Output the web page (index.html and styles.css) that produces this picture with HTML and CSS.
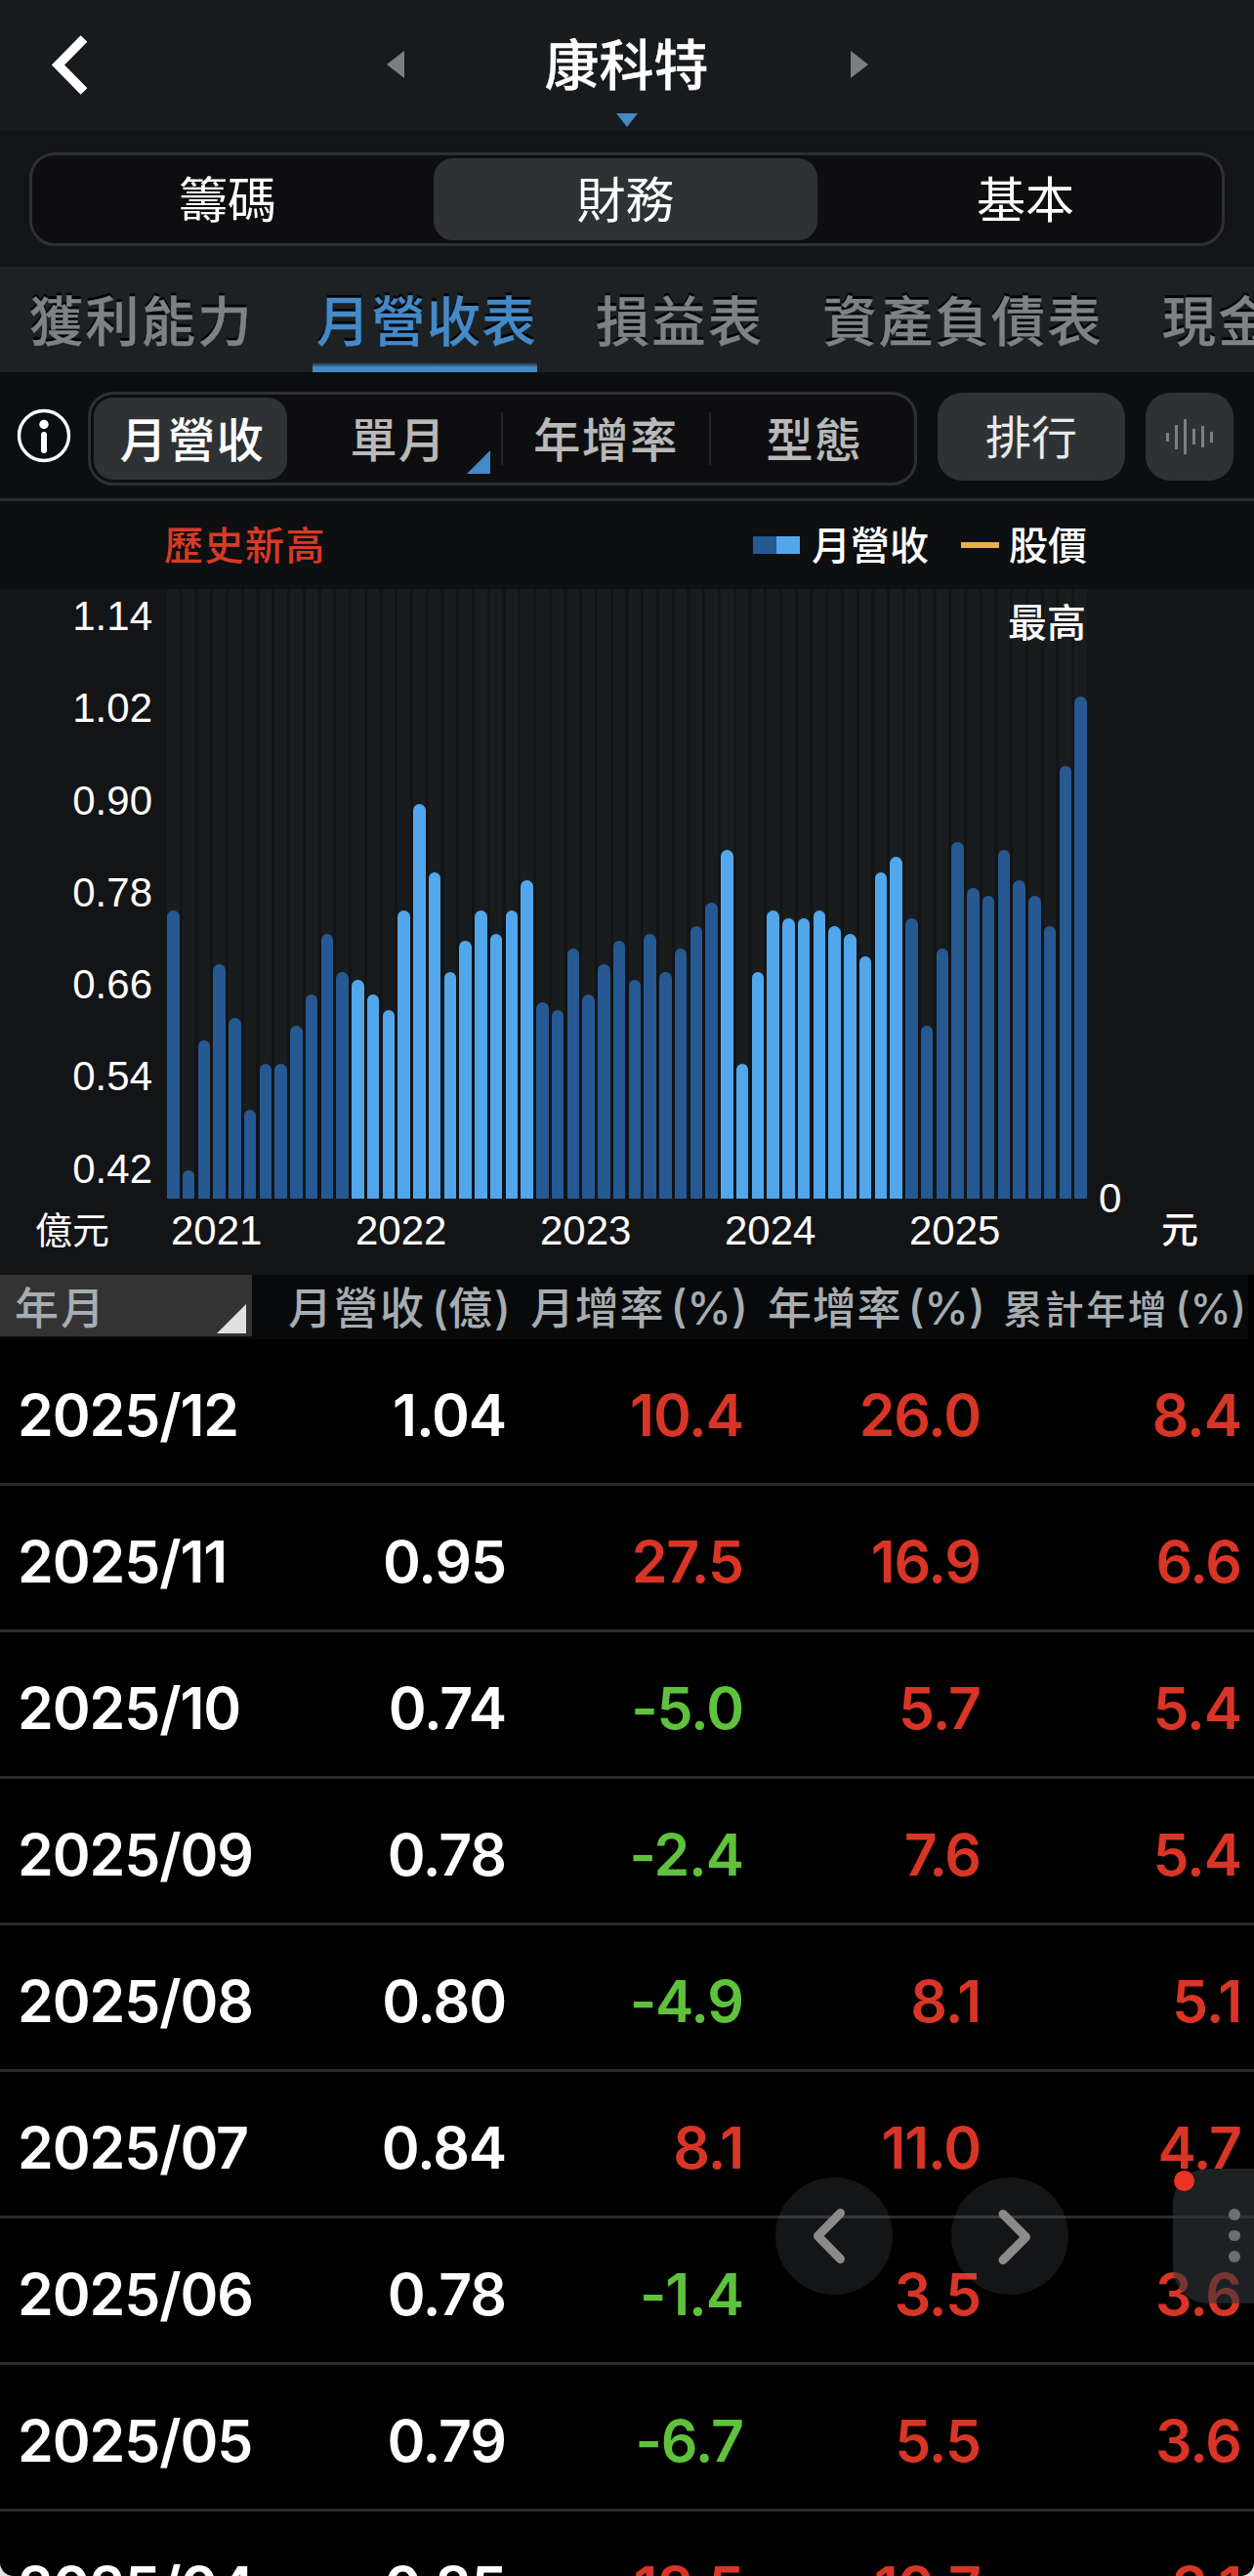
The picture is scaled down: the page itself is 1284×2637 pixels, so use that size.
FILE: index.html
```html
<!DOCTYPE html>
<html lang="zh-Hant">
<head>
<meta charset="utf-8">
<title>康科特 月營收表</title>
<link rel="stylesheet" href="styles.css">
</head>
<body>
<main class="app">
  <header class="header">
    <svg class="back" viewBox="0 0 38 62"><path d="M34 3.500 7.500 30.500 34 57.500" fill="none" stroke="#fff" stroke-width="9.5"/></svg>
    <svg class="prev" viewBox="0 0 18 28"><path d="M18 0v28L0 14z" fill="#7b7f82"/></svg>
    <h1 class="title">康科特<svg class="drop" viewBox="0 0 22 14"><path d="M0 0h22L11 14z" fill="#4489c8"/></svg></h1>
    <svg class="next" viewBox="0 0 18 28"><path d="M0 0v28L18 14z" fill="#7b7f82"/></svg>
  </header>

  <nav class="section-bar">
    <div class="segments">
      <span class="segment">籌碼</span><span class="segment segment-on">財務</span><span class="segment">基本</span>
    </div>
  </nav>

  <nav class="tabs">
    <span class="tab">獲利能力</span><span class="tab tab-on">月營收表</span><span class="tab">損益表</span><span class="tab">資產負債表</span><span class="tab">現金流量表</span>
  </nav>

  <div class="toolbar">
    <svg class="info" viewBox="0 0 56 56"><circle cx="28" cy="28" r="25.5" fill="none" stroke="#fff" stroke-width="3.4"/><circle cx="28" cy="16.500" r="4.700" fill="#fff"/><path d="M28 27v16" stroke="#fff" stroke-width="6" stroke-linecap="round"/></svg>
    <div class="filters">
      <span class="filter filter-on">月營收</span>
      <span class="filter">單月<i class="corner"></i></span>
      <span class="filter filter-line">年增率</span>
      <span class="filter filter-line filter-last">型態</span>
    </div>
    <button class="rank">排行</button>
    <button class="voice"><svg viewBox="0 0 90 90"><path d="M22.500 41v9M31.500 33v25M40.500 27v36M49.500 37v16M58.500 34v22M67.500 40v11" stroke="#7c8083" stroke-width="3"/></svg></button>
  </div>

  <section class="chart">
    <div class="legend">
      <span class="legend-text record">歷史新高</span>
      <span class="swatch"></span><span class="legend-text">月營收</span>
      <span class="line-swatch"></span><span class="legend-text">股價</span>
    </div>
    <div class="chart-body">
      <div class="axis">
        <span>1.14</span><span>1.02</span><span>0.90</span><span>0.78</span><span>0.66</span><span>0.54</span><span>0.42</span>
      </div>
      <div class="plot" id="plot"><span class="peak">最高</span></div>
      <div class="axis-right">0</div>
    </div>
    <div class="years">
      <span class="unit">億元</span>
      <span class="year">2021</span><span class="year">2022</span><span class="year">2023</span><span class="year">2024</span><span class="year">2025</span>
      <span class="unit unit-right">元</span>
    </div>
  </section>

  <section class="table">
    <div class="thead">
      <span class="th th-date">年月<i class="sort"></i></span>
      <span class="th">月營收<b class="paren">(</b>億<b class="paren close">)</b></span>
      <span class="th th-rate">月增率<b class="paren">(%)</b></span>
      <span class="th th-rate">年增率<b class="paren">(%)</b></span>
      <span class="th th-small">累計年增<b class="paren">(%)</b></span>
    </div>
    <div class="row"><span>2025/12</span><span>1.04</span><span class="up">10.4</span><span class="up">26.0</span><span class="up">8.4</span></div>
    <div class="row"><span>2025/11</span><span>0.95</span><span class="up">27.5</span><span class="up">16.9</span><span class="up">6.6</span></div>
    <div class="row"><span>2025/10</span><span>0.74</span><span class="down">-5.0</span><span class="up">5.7</span><span class="up">5.4</span></div>
    <div class="row"><span>2025/09</span><span>0.78</span><span class="down">-2.4</span><span class="up">7.6</span><span class="up">5.4</span></div>
    <div class="row"><span>2025/08</span><span>0.80</span><span class="down">-4.9</span><span class="up">8.1</span><span class="up">5.1</span></div>
    <div class="row"><span>2025/07</span><span>0.84</span><span class="up">8.1</span><span class="up">11.0</span><span class="up">4.7</span></div>
    <div class="row"><span>2025/06</span><span>0.78</span><span class="down">-1.4</span><span class="up">3.5</span><span class="up">3.6</span></div>
    <div class="row"><span>2025/05</span><span>0.79</span><span class="down">-6.7</span><span class="up">5.5</span><span class="up">3.6</span></div>
    <div class="row"><span>2025/04</span><span>0.85</span><span class="up">18.5</span><span class="up">10.7</span><span class="up">3.1</span></div>
  </section>

  <div class="float float-prev"><svg viewBox="0 0 120 120"><path d="M66.500 36.500 43.500 60l23 23.500"/></svg></div>
  <div class="float float-next"><svg viewBox="0 0 120 120"><path d="M53 37.500 76.500 61 53 84.500"/></svg></div>
  <div class="more"><i></i><i></i><i></i><b class="badge"></b></div>
</main>
<script src="chart.js"></script>
</body>
</html>
```
FILE: styles.css
```css
* { box-sizing: border-box; }
body {
  margin: 0;
  background: #e4e4e4;
  color: #fff;
  font-family: "Liberation Sans", "Noto Sans CJK TC", sans-serif;
}
i, b { font-style: normal; font-weight: inherit; }
svg { display: block; }

.app {
  position: relative;
  width: 1284px;
  height: 2637px;
  overflow: hidden;
  background: #000;
  border-radius: 0 0 14px 14px;
  font-family: "Noto Sans CJK TC", sans-serif;
}

.header {
  display: flex;
  align-items: center;
  height: 133px;
  padding-left: 52px;
  background: #181b1e;
}
.back { width: 38px; height: 62px; }
.prev { width: 18px; height: 28px; margin: -1px 0 0 306px; }
.next { width: 18px; height: 28px; margin-top: -1px; }
.title {
  position: relative;
  width: 457px;
  height: 133px;
  margin: 0;
  padding-right: 2px;
  font-size: 56px;
  line-height: 125px;
  font-weight: 500;
  text-align: center;
  -webkit-text-stroke: .3px;
}
.drop { position: absolute; left: 217px; top: 116px; width: 22px; height: 14px; }

.section-bar { height: 140px; padding: 23px 30px 0; background: #131416; }
.segments {
  display: grid;
  grid-template-columns: 400px 416px 402px;
  height: 96px;
  border: 3px solid #2d3031;
  border-radius: 26px;
  background: #0e0e10;
}
.segment {
  margin: 3px 0;
  border-radius: 20px;
  font-size: 50px;
  line-height: 78px;
  text-align: center;
}
.segment-on { margin: 3px 12px 3px 11px; background: #2e3234; }

.tabs {
  display: flex;
  gap: 60px;
  height: 108px;
  padding-left: 30px;
  overflow: hidden;
  background: #1d2124;
}
.tab {
  flex: none;
  height: 108px;
  color: #7e8286;
  font-size: 55px;
  line-height: 104px;
  font-weight: 500;
  letter-spacing: 2.5px;
  text-shadow: 0 -3px 0 #000;
  -webkit-text-stroke: .4px;
}
.tab-on {
  padding-left: 4px;
  letter-spacing: 1.5px;
  color: #4489c8;
  background: linear-gradient(#1d2124, #4489c8 5px) bottom / 100% 10px no-repeat;
}

.toolbar {
  display: flex;
  align-items: flex-start;
  height: 132px;
  padding: 20px 21px 0 17px;
  border-bottom: 3px solid #2a2e31;
  background: #0b0f12;
}
.info { width: 56px; height: 56px; margin: 17px 17px 0 0; }
.filters {
  display: grid;
  grid-template-columns: 210px 210px 213px 210px;
  width: 849px;
  height: 96px;
  border: 3px solid #2d3031;
  border-radius: 26px;
  background: #0e0e10;
}
.filter {
  position: relative;
  color: #b9b9b9;
  font-size: 48px;
  line-height: 87px;
  font-weight: 500;
  letter-spacing: 1.5px;
  text-align: center;
  -webkit-text-stroke: .2px;
}
.filter-on {
  margin: 3px 9px 3px 3px;
  padding-left: 4px;
  border-radius: 20px;
  background: #2e3234;
  color: #fff;
  line-height: 81px;
}
.filter-line { padding-left: 2px; background: linear-gradient(#222426, #222426) 0 18px / 2px 54px no-repeat; }
.filter-last { padding-left: 6px; }
.corner {
  position: absolute;
  right: 11px;
  bottom: 9px;
  width: 24px;
  height: 24px;
  background: #4489c8;
  clip-path: polygon(100% 0, 100% 100%, 0 100%);
}
.rank, .voice {
  height: 90px;
  margin: 1px 0 0 21px;
  padding: 0;
  border: 0;
  border-radius: 25px;
  background: #2e3234;
  color: #e9e9e9;
  font: 400 47px/84px "Noto Sans CJK TC", sans-serif;
}
.rank { width: 192px; padding-bottom: 4px; }
.voice { width: 90px; }

.chart { height: 792px; background: #131416; }
.legend {
  display: flex;
  align-items: center;
  height: 90px;
  padding: 0 171px 0 168px;
  background: #0e0f11;
  font-size: 40px;
  line-height: 84px;
  font-weight: 500;
}
.legend-text { padding-bottom: 4px; }
.record { margin-right: auto; color: #d83a26; letter-spacing: 1.5px; }
.swatch { width: 48px; height: 18px; margin-right: 12px; background: linear-gradient(90deg, #265892 50%, #51a6ec 50%); }
.line-swatch { width: 39px; height: 6px; margin: 0 10px 0 33px; background: #e9b04a; }

.chart-body { display: flex; height: 624px; font: 42px/94.300px "Liberation Sans", sans-serif; }
.axis {
  display: flex;
  flex-direction: column;
  width: 171px;
  margin-top: -19px;
  padding-right: 15px;
  text-align: right;
}
.plot {
  position: relative;
  display: flex;
  justify-content: space-between;
  width: 942px;
}
.slot { display: flex; align-items: flex-end; width: 12.600px; background: #191c1d; }
.bar { width: 100%; border-radius: 7px 7px 0 0; background: #265892; }
.bar-alt { background: #51a6ec; }
.peak {
  position: absolute;
  right: 1px;
  top: 3px;
  font: 500 40px/58px "Noto Sans CJK TC", sans-serif;
}
.axis-right { padding-left: 12px; margin-top: 577px; }
.years {
  display: flex;
  height: 78px;
  padding-left: 36px;
  font: 42px/66px "Liberation Sans", sans-serif;
}
.unit { width: 139px; font: 38px/59px "Noto Sans CJK TC", sans-serif; }
.year { width: 189px; }
.unit-right { width: 40px; margin-left: 69px; line-height: 57px; font-weight: 500; }

.thead, .row {
  display: grid;
  grid-template-columns: 258px 265px 243px 243px 269px;
}
.thead {
  width: 1278px;
  height: 66px;
  background: #08090b;
  color: #a6adb0;
  font-size: 45px;
  line-height: 63px;
  font-weight: 500;
}
.th { text-align: right; letter-spacing: 2px; white-space: nowrap; }
.th-date { position: relative; height: 63px; padding-left: 15px; background: #333334; text-align: left; }
.th-rate { letter-spacing: .8px; }
.th-small { padding-right: 2px; font-size: 40px; line-height: 67px; letter-spacing: 2.500px; }
.sort {
  position: absolute;
  right: 6px;
  bottom: 3px;
  width: 30px;
  height: 30px;
  background: #e0e0e0;
  clip-path: polygon(100% 0, 100% 100%, 0 100%);
}
.paren { margin-left: 6px; font-family: Inter, sans-serif; font-size: 46px; letter-spacing: 0; }
.close { margin-left: 0; }
.th-small .paren { font-size: 42px; }

.row {
  height: 150px;
  border-bottom: 3px solid #2b2b2c;
  font: 600 59px/155px Inter, sans-serif;
  letter-spacing: -1.100px;
  text-align: right;
}
.row span { height: 147px; padding-right: 5px; }
.row span:first-child { padding-left: 18px; text-align: left; }
.row span:last-child { padding-right: 7px; }
.up { color: #d93526; }
.down { color: #5fc23c; }

.float {
  position: absolute;
  top: 2229px;
  width: 120px;
  height: 120px;
  border-radius: 50%;
  background: rgba(150, 158, 172, .135);
}
.float path { fill: none; stroke: #8a8a8b; stroke-width: 9; stroke-linecap: round; stroke-linejoin: round; }
.float-prev { left: 794px; }
.float-next { left: 974px; }
.more {
  position: absolute;
  top: 2220px;
  right: 0;
  display: flex;
  flex-direction: column;
  gap: 10px;
  width: 83px;
  height: 138px;
  padding: 41px 0 0 57px;
  border-radius: 36px 0 0 36px;
  background: rgba(51, 56, 61, .59);
}
.more i { width: 11.600px; height: 11.600px; border-radius: 50%; background: #6c6f72; }
.badge { position: absolute; left: 1px; top: 2px; width: 21px; height: 21px; border-radius: 50%; background: #ea3323; }
```
FILE: chart.js
```js
// Bar heights in pixels, one list per year, January to December.
const years = [
  [295, 29, 162, 240, 185, 91, 138, 138, 177, 209, 271, 232],
  [224, 209, 193, 295, 404, 334, 232, 264, 295, 271, 295, 326],
  [201, 193, 256, 209, 240, 264, 224, 271, 232, 256, 279, 303],
  [357, 138, 232, 295, 287, 287, 295, 279, 271, 248, 334, 350],
  [287, 177, 256, 365, 318, 310, 357, 326, 310, 279, 443, 514]
];
const plot = document.getElementById('plot');
years.forEach((months, index) => {
  months.forEach((height) => {
    const slot = document.createElement('div');
    const bar = document.createElement('div');
    slot.className = 'slot';
    bar.className = index % 2 ? 'bar bar-alt' : 'bar';
    bar.style.height = height + 'px';
    slot.append(bar);
    plot.append(slot);
  });
});
```
